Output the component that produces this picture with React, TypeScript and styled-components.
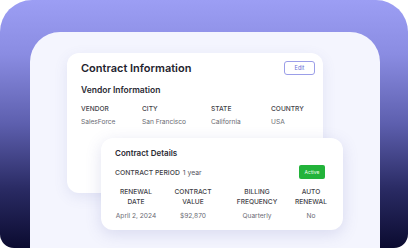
import React from 'react'
import styled, { createGlobalStyle } from 'styled-components'

const Global = createGlobalStyle`
  html, body {
    margin: 0;
    padding: 0;
    background: #ffffff;
    font-family: Inter, "Noto Sans", sans-serif;
  }
`

const Frame = styled.div`
  width: 408px;
  height: 248px;
  border-radius: 32px 32px 14px 14px;
  background: linear-gradient(180deg, #9c9ef4 0%, #8a8ce2 22%, #5d5fae 50%, #2a2b64 76%, #0b0b30 100%);
  overflow: hidden;
  padding: 32px 28px 0 30px;
  box-sizing: border-box;
`

const Panel = styled.div`
  position: relative;
  height: 230px;
  border-radius: 30px 30px 0 0;
  background: #f4f5fe;
  padding: 21px 0 0 37px;
  box-sizing: border-box;
`

const Card = styled.div`
  background: #ffffff;
  border-radius: 12px;
  box-shadow: 0 4px 14px rgba(90, 95, 170, 0.12);
  box-sizing: border-box;
`

const InfoCard = styled(Card)`
  width: 256px;
  height: 140px;
  padding: 8px 8px 0 14px;
`

const DetailsCard = styled(Card)`
  position: absolute;
  left: 71px;
  top: 106px;
  width: 242px;
  height: 92px;
  padding: 10px 6px 0 14px;
  box-shadow: 0 4px 16px rgba(90, 95, 170, 0.18);
`

const HeadRow = styled.div`
  display: flex;
  justify-content: space-between;
  align-items: center;
`

const Title = styled.div`
  font-size: 11px;
  line-height: 14px;
  font-weight: 600;
  color: #23232e;
`

const EditButton = styled.div`
  width: 31px;
  height: 14px;
  border: 1px solid #9b9ee8;
  border-radius: 3px;
  box-sizing: border-box;
  display: flex;
  align-items: center;
  justify-content: center;
  font-size: 5.5px;
  color: #6b6fd6;
`

const Subtitle = styled.div<{ $size: number; $gap: number }>`
  font-size: ${(p) => p.$size}px;
  line-height: 10px;
  font-weight: 600;
  color: #2a2a33;
  margin-top: ${(p) => p.$gap}px;
`

const Grid = styled.div<{ $cols: string; $gap: number }>`
  display: grid;
  grid-template-columns: ${(p) => p.$cols};
  margin-top: ${(p) => p.$gap}px;
`

const Label = styled.div`
  font-size: 6.6px;
  font-weight: 500;
  color: #3f3f48;
  line-height: 10px;
`

const Value = styled.div`
  font-size: 6.6px;
  color: #6a6a72;
  line-height: 10px;
  white-space: nowrap;
`

const Cell = styled.div<{ $center?: boolean }>`
  display: flex;
  flex-direction: column;
  align-items: ${(p) => (p.$center ? 'center' : 'flex-start')};
  text-align: ${(p) => (p.$center ? 'center' : 'left')};
  gap: ${(p) => (p.$center ? 4 : 3)}px;
`

const PeriodRow = styled.div`
  display: flex;
  align-items: center;
  justify-content: space-between;
  margin-top: 7px;
  padding-right: 12px;
`

const Period = styled.div`
  font-size: 6.8px;
  font-weight: 500;
  color: #3f3f48;
  span {
    color: #55555e;
    font-weight: 400;
    margin-left: 3px;
  }
`

const Badge = styled.div`
  width: 26px;
  height: 14px;
  border-radius: 2px;
  background: #22b33a;
  color: #e8ffe9;
  font-size: 5px;
  display: flex;
  align-items: center;
  justify-content: center;
`

const vendor = [
  ['VENDOR', 'SalesForce'],
  ['CITY', 'San Francisco'],
  ['STATE', 'California'],
  ['COUNTRY', 'USA'],
]

const details = [
  ['RENEWAL', 'DATE', 'April 2, 2024'],
  ['CONTRACT', 'VALUE', '$92,870'],
  ['BILLING', 'FREQUENCY', 'Quarterly'],
  ['AUTO', 'RENEWAL', 'No'],
]

export default function App() {
  return (
    <>
      <Global />
      <Frame>
        <Panel>
          <InfoCard>
            <HeadRow>
              <Title>Contract Information</Title>
              <EditButton>Edit</EditButton>
            </HeadRow>
            <Subtitle $size={8.5} $gap={10}>Vendor Information</Subtitle>
            <Grid $cols="61px 69px 60px 1fr" $gap={9}>
              {vendor.map(([l, v]) => (
                <Cell key={l}>
                  <Label>{l}</Label>
                  <Value>{v}</Value>
                </Cell>
              ))}
            </Grid>
          </InfoCard>
          <DetailsCard>
            <Subtitle $size={8} $gap={0}>Contract Details</Subtitle>
            <PeriodRow>
              <Period>CONTRACT PERIOD<span>1 year</span></Period>
              <Badge>Active</Badge>
            </PeriodRow>
            <Grid $cols="42px 72px 56px 52px" $gap={8}>
              {details.map(([a, b, v]) => (
                <Cell key={a} $center>
                  <Label>{a}<br />{b}</Label>
                  <Value>{v}</Value>
                </Cell>
              ))}
            </Grid>
          </DetailsCard>
        </Panel>
      </Frame>
    </>
  )
}
